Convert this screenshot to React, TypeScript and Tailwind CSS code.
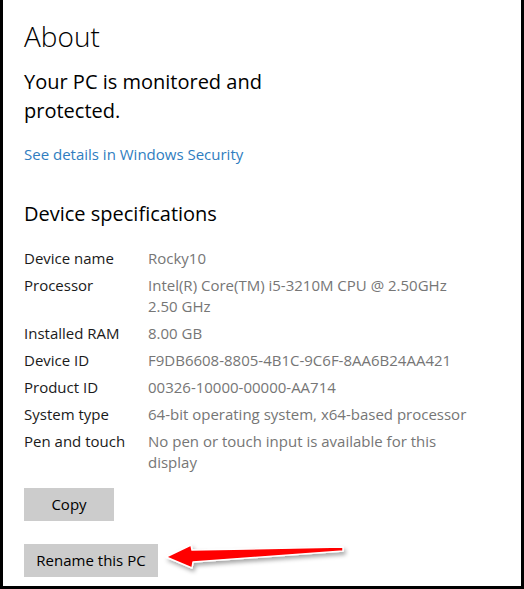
import React from 'react';

const specs: { label: string; lines: string[] }[] = [
  { label: 'Device name', lines: ['Rocky10'] },
  { label: 'Processor', lines: ['Intel(R) Core(TM) i5-3210M CPU @ 2.50GHz', '2.50 GHz'] },
  { label: 'Installed RAM', lines: ['8.00 GB'] },
  { label: 'Device ID', lines: ['F9DB6608-8805-4B1C-9C6F-8AA6B24AA421'] },
  { label: 'Product ID', lines: ['00326-10000-00000-AA714'] },
  { label: 'System type', lines: ['64-bit operating system, x64-based processor'] },
  { label: 'Pen and touch', lines: ['No pen or touch input is available for this', 'display'] },
];

const Arrow: React.FC = () => (
  <svg className="absolute left-[157px] top-[533px]" width="190" height="45" viewBox="0 0 190 45">
    <defs>
      <filter id="shadow" x="-10%" y="-40%" width="130%" height="200%">
        <feDropShadow dx="2" dy="3" stdDeviation="2" floodColor="#000" floodOpacity="0.35" />
      </filter>
    </defs>
    <polygon
      points="6,24 31,12 32,17 183,14 183,18 33,29 32,35"
      fill="#ff0000"
      stroke="#ffffff"
      strokeWidth="1.5"
      strokeLinejoin="round"
      filter="url(#shadow)"
    />
  </svg>
);

export default function App() {
  return (
    <div className="relative w-[524px] h-[589px] bg-white border-x-[3px] border-b-[3px] border-black overflow-hidden font-['Segoe_UI','Open_Sans',sans-serif] text-black">
      <div className="pl-[21px] pt-[17px]">
        <h1 className="text-[28px] leading-[38px] font-light">About</h1>
        <p className="mt-[12px] text-[20px] leading-[29px]">
          Your PC is monitored and
          <br />
          protected.
        </p>
        <a className="block mt-[19px] text-[15px] leading-[21px] text-[#2f7dc0]">See details in Windows Security</a>

        <h2 className="mt-[35px] text-[20px] leading-[28px]">Device specifications</h2>

        <div className="mt-[20px] grid grid-cols-[124px_1fr] gap-y-[6px] text-[15px] leading-[21px]">
          {specs.map((s) => (
            <React.Fragment key={s.label}>
              <div className="text-[#1a1a1a]">{s.label}</div>
              <div className="text-[#767676]">
                {s.lines.map((l) => (
                  <div key={l}>{l}</div>
                ))}
              </div>
            </React.Fragment>
          ))}
        </div>

        <div className="mt-[15px] flex flex-col items-start gap-[23px]">
          <button className="w-[90px] h-[33px] bg-[#cccccc] text-[15px]">Copy</button>
          <button className="w-[134px] h-[33px] bg-[#cccccc] text-[15px]">Rename this PC</button>
        </div>
      </div>
      <Arrow />
    </div>
  );
}
